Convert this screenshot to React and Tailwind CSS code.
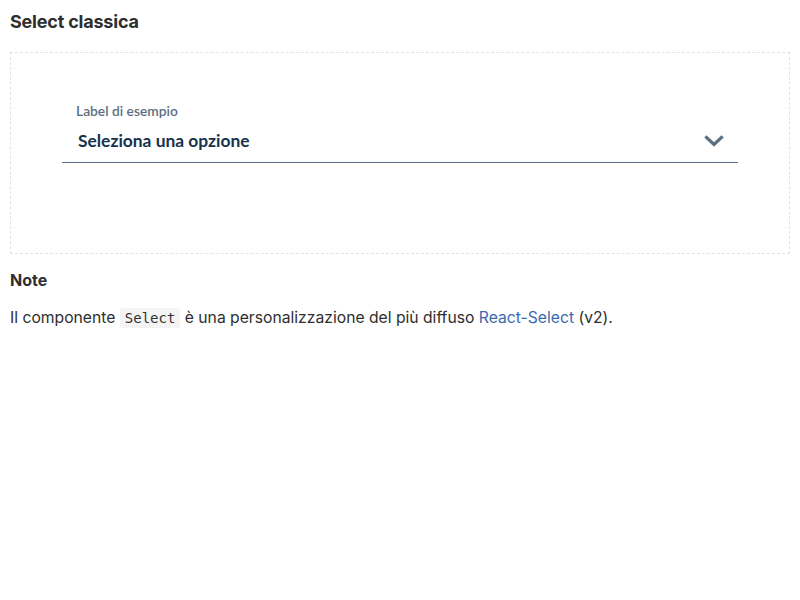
import { useState } from 'react';

function Chevron() {
  return (
    <svg width="20" height="14" viewBox="0 0 20 14" className="text-[#5c6f82]">
      <path d="M2.5 3.5 L10 10.5 L17.5 3.5" fill="none" stroke="currentColor" strokeWidth="3.2" strokeLinecap="square" />
    </svg>
  );
}

export default function App() {
  const [value] = useState(null);

  return (
    <div className="min-h-screen bg-white px-[10px] pt-[10px] font-['Inter','Liberation_Sans',sans-serif] text-[#333]">
      <h2 className="text-[18px] leading-[24px] font-bold tracking-[-0.2px] text-[#2e2e2e]">Select classica</h2>

      {/* Example area */}
      <div className="mt-[18px] h-[202px] border border-dashed border-[#e3e3e3] px-[51px] pt-[50px]">
        <div className="font-['Lato','Liberation_Sans',sans-serif]">
          <label className="block pl-[14px] text-[13.8px] leading-[16px] font-semibold text-[#5c6f82]">Label di esempio</label>
          <div className="mt-[6px] flex h-[38px] items-center justify-between border-b border-[#5c6f82] pl-[16px] pr-[14px] pb-[5px]">
            <span className="text-[17.4px] font-bold text-[#17324d]">{value ?? 'Seleziona una opzione'}</span>
            <Chevron />
          </div>
        </div>
      </div>

      {/* Notes */}
      <h4 className="mt-[16px] text-[16px] leading-[20px] font-bold text-[#2e2e2e]">Note</h4>
      <p className="mt-[17px] text-[15.7px] leading-[22px] text-[#2e2e2e]">
        Il componente{' '}
        <code className="rounded-[3px] bg-[#f4f4f4] px-[5px] py-[2px] font-['DejaVu_Sans_Mono',monospace] text-[14px] text-[#333]">Select</code>{' '}
        è una personalizzazione del più diffuso{' '}
        <a href="#" className="text-[#3a6ab0]">React-Select</a> (v2).
      </p>
    </div>
  );
}
